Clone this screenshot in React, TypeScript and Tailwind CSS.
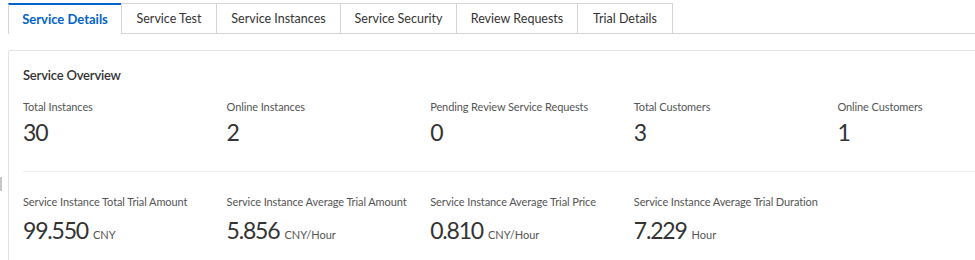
import React from "react";

const tabs = [
  "Service Details",
  "Service Test",
  "Service Instances",
  "Service Security",
  "Review Requests",
  "Trial Details",
];
const tabWidths = [113, 95, 124, 116, 121, 95];

const row1 = [
  { label: "Total Instances", value: "30" },
  { label: "Online Instances", value: "2" },
  { label: "Pending Review Service Requests", value: "0" },
  { label: "Total Customers", value: "3" },
  { label: "Online Customers", value: "1" },
];

const row2 = [
  { label: "Service Instance Total Trial Amount", value: "99.550", unit: "CNY" },
  { label: "Service Instance Average Trial Amount", value: "5.856", unit: "CNY/Hour" },
  { label: "Service Instance Average Trial Price", value: "0.810", unit: "CNY/Hour" },
  { label: "Service Instance Average Trial Duration", value: "7.229", unit: "Hour" },
];

function Stat({ label, value, unit }: { label: string; value: string; unit?: string }) {
  return (
    <div className="flex flex-col">
      <div className="whitespace-nowrap text-[11px] leading-[16px] tracking-[-0.1px] text-[#555]">{label}</div>
      <div className={unit ? "mt-[5px] flex items-baseline leading-[30px]" : "mt-[2px] flex items-baseline leading-[30px]"}>
        <span className="text-[23px] tracking-[-1.2px] text-[#333]">{value}</span>
        {unit && <span className="ml-[5px] text-[11px] text-[#555]">{unit}</span>}
      </div>
    </div>
  );
}

export default function App() {
  return (
    <div
      className="relative h-[260px] w-[975px] overflow-hidden bg-white"
      style={{ fontFamily: "Lato, 'Liberation Sans', sans-serif" }}
    >
      <div className="flex pl-[8px] pt-[3px]">
        {tabs.map((t, i) => {
          const active = i === 0;
          return (
            <div
              key={t}
              style={{ width: tabWidths[i] }}
              className={
                active
                  ? "flex h-[31px] items-center justify-center border-l border-t-2 border-l-[#d5d5d5] border-t-[#0064c8] pt-[1px] text-[13px] font-bold text-[#0064c8]"
                  : "flex h-[31px] items-center justify-center border-b border-l border-t border-[#d5d5d5] pt-[1px] text-[12.5px] text-[#333]"
              }
            >
              {t}
            </div>
          );
        })}
        <div className="h-[31px] flex-1 border-b border-l border-[#d5d5d5]" />
      </div>

      <div className="ml-[8px] mt-[16px] w-[1048px] rounded-[2px] border border-[#e3e3e3] px-[14px] pb-[40px] pt-[14px]">
        <div className="text-[13px] font-semibold leading-[20px] tracking-[-0.2px] text-[#333]">Service Overview</div>
        <div className="mt-[14px] grid grid-cols-5 border-b border-[#eeeeee] pb-[24px]">
          {row1.map((s) => (
            <Stat key={s.label} {...s} />
          ))}
        </div>
        <div className="grid grid-cols-5 pt-[22px]">
          {row2.map((s) => (
            <Stat key={s.label} {...s} />
          ))}
        </div>
      </div>

      <div className="absolute left-0 top-[177px] h-[14px] w-[2px] bg-[#c8c8c8]" />
    </div>
  );
}
